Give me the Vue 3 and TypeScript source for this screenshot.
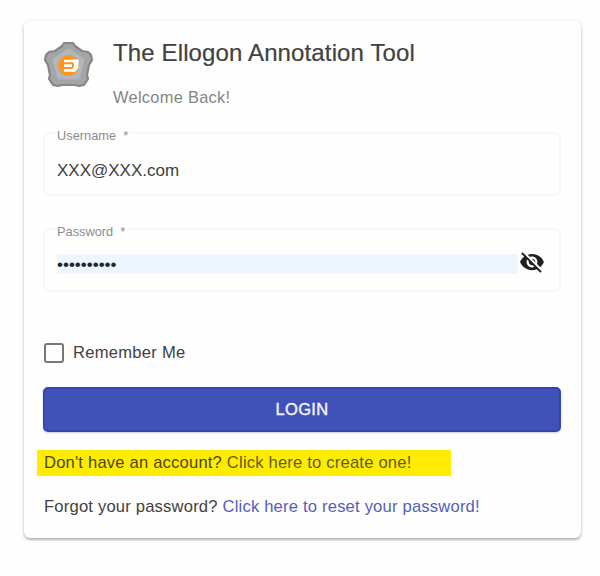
<script setup lang="ts">
import { ref } from 'vue'

const username = ref('XXX@XXX.com')
const password = ref('••••••••••')
const remember = ref(false)
</script>

<template>
  <main class="page">
    <form class="card" @submit.prevent>
      <header class="head">
        <svg class="logo" viewBox="0 0 50 50">
          <path d="M18 6 L20 3 H29 L31 6 L38 11 L44 12 L47 15 L48 20 L45 25 L43 35 L44 39 L40 45 L35 46 L31 45 H18 L14 46 L9 45 L5 39 L6 35 L4 25 L1 20 L2 15 L5 12 L11 11 Z" fill="#a3a5a7" stroke="#868686" stroke-width="2.2" stroke-linejoin="round" />
          <path d="M24.5 10 L39 20 L34 38 H15 L10 20 Z" fill="#b0b7be" stroke="#b0b7be" stroke-width="3" stroke-linejoin="round" />
          <circle cx="24.5" cy="25.5" r="10.5" fill="#ff951f" />
          <path d="M20 21 H30 M20 25.6 H28 M20 30.4 H30" stroke="#fff" stroke-width="2.6" fill="none" />
          <path d="M29 19.5 H34.5 V28 L31 31.7 H28 V29 L30 27 V24 L29 22 Z" fill="#fff" />
        </svg>
        <div class="titles">
          <h1>The Ellogon Annotation Tool</h1>
          <p>Welcome Back!</p>
        </div>
      </header>

      <fieldset class="field">
        <legend>Username&nbsp; *</legend>
        <span class="value">{{ username }}</span>
      </fieldset>

      <fieldset class="field second">
        <legend>Password&nbsp; *</legend>
        <span class="value filled">{{ password }}</span>
        <svg class="eye" viewBox="0 0 24 24">
          <path d="M12 7c2.76 0 5 2.24 5 5 0 .65-.13 1.26-.36 1.83l2.92 2.92c1.51-1.26 2.7-2.89 3.43-4.75-1.73-4.39-6-7.5-11-7.5-1.4 0-2.74.25-3.98.7l2.16 2.16C10.74 7.13 11.35 7 12 7zM2 4.27l2.28 2.28.46.46C3.08 8.3 1.78 10.02 1 12c1.73 4.39 6 7.5 11 7.5 1.55 0 3.03-.3 4.38-.84l.42.42L19.73 22 21 20.73 3.27 3 2 4.27zM7.53 9.8l1.55 1.55c-.05.21-.08.43-.08.65 0 1.66 1.34 3 3 3 .22 0 .44-.03.65-.08l1.55 1.55c-.67.33-1.41.53-2.2.53-2.76 0-5-2.24-5-5 0-.79.2-1.53.53-2.2zm4.31-.78l3.15 3.15.02-.16c0-1.66-1.34-3-3-3l-.17.01z" />
        </svg>
      </fieldset>

      <label class="remember" @click="remember = !remember">
        <span class="box" :class="{ checked: remember }"></span>
        <span>Remember Me</span>
      </label>

      <button class="login" type="submit">LOGIN</button>

      <p class="create">Don't have an account? <a>Click here to create one!</a></p>
      <p class="forgot">Forgot your password? <a>Click here to reset your password!</a></p>
    </form>
  </main>
</template>

<style>
body { margin: 0; background: #fefefe; }
</style>

<style scoped>
.page {
  box-sizing: border-box;
  height: 576px;
  padding: 21px 19px 0 24px;
  font-family: "Liberation Sans", Arial, sans-serif;
  color: #414141;
}
.card {
  box-sizing: border-box;
  height: 517px;
  padding: 17px 20px 0 19px;
  display: flex;
  flex-direction: column;
  background: #fefefe;
  border-radius: 6px;
  box-shadow: 0 2px 2px rgba(0, 0, 0, .2), 0 1px 4px rgba(0, 0, 0, .16);
}
.head { display: flex; flex: none; height: 90px; }
.logo { width: 50px; height: 50px; margin: 2px 0 0 1px; }
.titles { margin-left: 19px; }
h1, p { margin: 0; font-weight: 400; }
h1 { font-size: 24px; line-height: 30px; letter-spacing: .13px; white-space: nowrap; color: #414141; -webkit-text-stroke: .2px #414141; }
.titles p { margin-top: 19px; font-size: 16.4px; line-height: 20px; letter-spacing: .3px; color: #858585; }
.field {
  box-sizing: border-box;
  flex: none;
  min-width: 0;
  width: 518px;
  height: 68px;
  margin: 0;
  padding: 0 15px 0 12px;
  border: 2px solid #f7f7f7;
  border-radius: 6px;
  display: flex;
  align-items: flex-start;
}
.field.second { margin-top: 28px; }
legend {
  height: 10px;
  line-height: 15px;
  padding: 0 4px 0 0;
  font-size: 12.8px;
  color: #8d8d8d;
  white-space: pre;
}
.value { flex: 1; margin-top: 23px; height: 20px; font-size: 17px; line-height: 20px; }
.filled { margin-top: 20px; background: #edf5ff; line-height: 21px; color: #262626; }
.eye { width: 26px; height: 26px; margin: 15px -1px 0 1px; fill: #202020; }
.remember { display: flex; flex: none; align-items: center; gap: 9px; height: 24px; margin: 49px 0 0 1px; font-size: 16.6px; letter-spacing: .25px; }
.box { box-sizing: border-box; width: 20px; height: 20px; border: 2px solid #777; border-radius: 3px; }
.box.checked { background: #4052b8; }
.login {
  width: 518px;
  height: 45px;
  margin-top: 22px;
  flex: none;
  padding: 0 0 2px;
  border: 2px solid #3445b4;
  border-radius: 5px;
  background: #4052b8;
  color: #f3f4ff;
  font: 500 16.5px/38px "Liberation Sans", Arial, sans-serif;
  letter-spacing: .3px;
  -webkit-text-stroke: .4px #f3f4ff;
  box-shadow: 0 1px 2px rgba(0, 0, 0, .2);
}
.create, .forgot { white-space: nowrap; font-size: 16.6px; letter-spacing: .19px; }
.create { box-sizing: border-box; flex: none; width: 414px; height: 26px; margin: 18px 0 0 -6px; padding-left: 7px; line-height: 26px; background: #ffec00; color: #4d480b; }
.create a { color: #625d0c; }
.forgot { margin-top: 19px; padding-left: 1px; line-height: 24px; }
.forgot a { color: #5360bd; }
</style>
